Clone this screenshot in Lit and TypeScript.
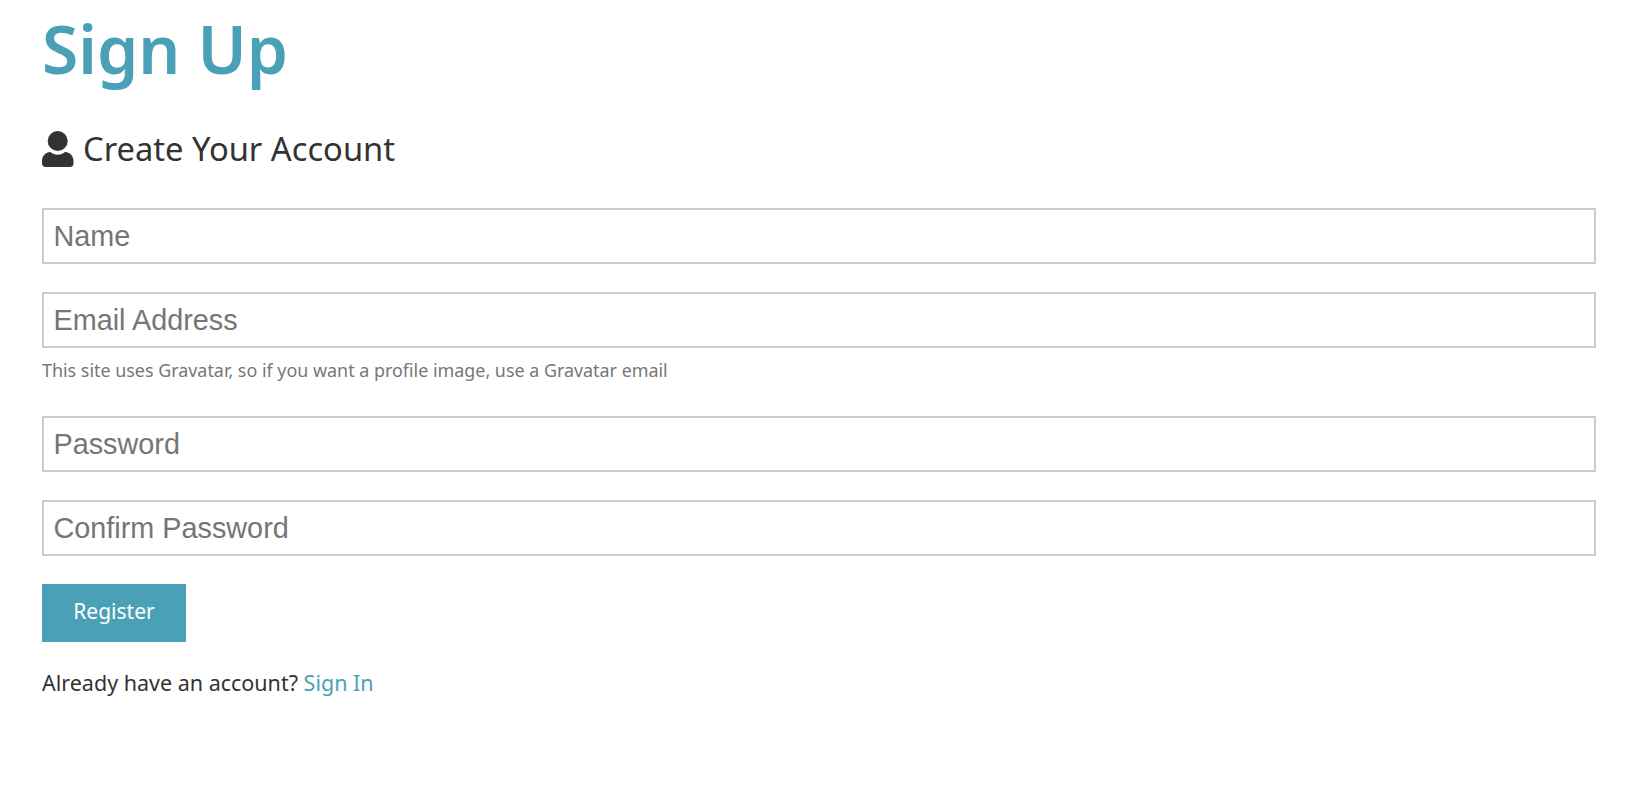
import { LitElement, html, css } from "lit";
import { customElement } from "lit/decorators.js";

@customElement("app-root")
export class AppRoot extends LitElement {
  static styles = css`
    :host {
      display: block;
      font-family: "Noto Sans", "Open Sans", sans-serif;
      color: #333;
      background: #fff;
      min-height: 800px;
      padding: 0 52px 0 42px;
      box-sizing: border-box;
    }
    h1 {
      margin: 0;
      padding-top: 6px;
      font-size: 66px;
      line-height: 84px;
      font-weight: 600;
      color: #4aa1b7;
    }
    .lead {
      margin: 38px 0 0;
      display: flex;
      align-items: center;
      gap: 9px;
      font-size: 32.7px;
      line-height: 42px;
      font-weight: 400;
    }
    .lead svg {
      width: 32px;
      height: 36px;
      fill: #333;
      display: block;
    }
    form {
      margin-top: 38px;
      display: flex;
      flex-direction: column;
    }
    .group {
      margin-bottom: 28px;
    }
    .group.hinted {
      margin-bottom: 33px;
    }
    input {
      display: block;
      width: 100%;
      height: 56px;
      box-sizing: border-box;
      border: 2px solid #ccc;
      border-radius: 0;
      padding: 0 9.5px;
      margin: 0;
      background: #fff;
      font-family: "Liberation Sans", Arial, sans-serif;
      font-size: 28.8px;
      color: #333;
      outline: none;
    }
    input::placeholder {
      color: #757575;
      opacity: 1;
    }
    .hint {
      margin-top: 9px;
      font-size: 17.9px;
      line-height: 26px;
      color: #777;
    }
    button {
      align-self: flex-start;
      width: 144px;
      height: 58px;
      border: none;
      background: #4aa1b7;
      color: #fff;
      font-family: inherit;
      font-size: 21px;
      padding: 0 0 4px;
    }
    .signin {
      margin: 26px 0 0;
      font-size: 21.5px;
      line-height: 30px;
      color: #333;
    }
    a {
      color: #4aa1b7;
      text-decoration: none;
    }
  `;

  render() {
    return html`
      <h1>Sign Up</h1>
      <p class="lead">
        <svg viewBox="0 0 32 36" aria-hidden="true">
          <circle cx="15.7" cy="10" r="10"></circle>
          <path d="M8.5 21 C10.5 22.8 13 23.7 15.7 23.7 C18.4 23.7 20.9 22.8 22.9 21 C28 21 31.5 25 31.5 30 V32.5 C31.5 34.5 30 36 28 36 H3.5 C1.5 36 0 34.5 0 32.5 V30 C0 25 3.5 21 8.5 21 Z"></path>
        </svg>
        <span>Create Your Account</span>
      </p>
      <form @submit=${(e: Event) => e.preventDefault()}>
        <div class="group"><input type="text" placeholder="Name" /></div>
        <div class="group hinted">
          <input type="email" placeholder="Email Address" />
          <div class="hint">This site uses Gravatar, so if you want a profile image, use a Gravatar email</div>
        </div>
        <div class="group"><input type="password" placeholder="Password" /></div>
        <div class="group"><input type="password" placeholder="Confirm Password" /></div>
        <button type="submit">Register</button>
      </form>
      <p class="signin">Already have an account? <a href="#">Sign In</a></p>
    `;
  }
}
